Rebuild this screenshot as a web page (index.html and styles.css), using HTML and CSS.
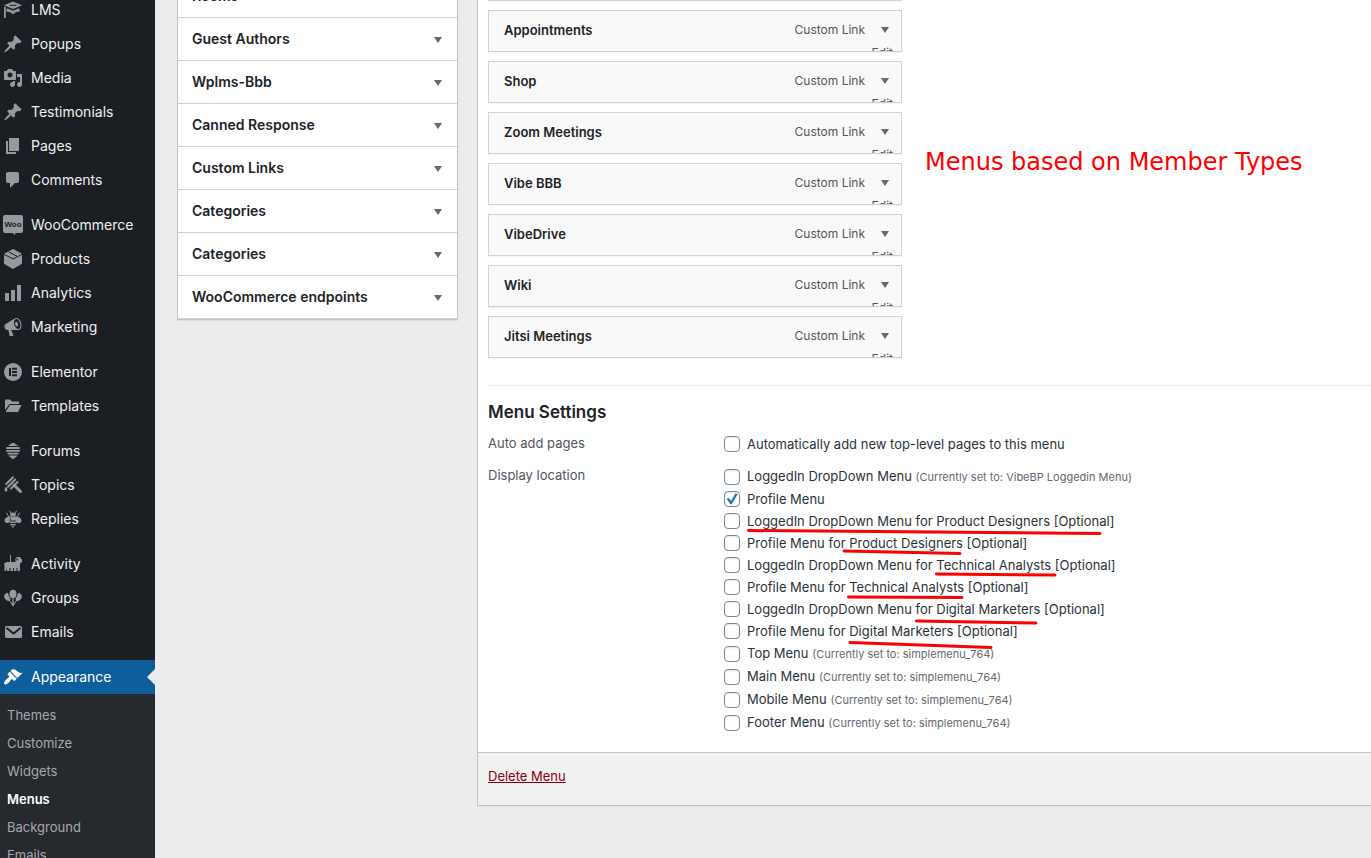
FILE: index.html
```html
<!DOCTYPE html>
<html lang="en">
<head>
<meta charset="utf-8">
<title>Menus</title>
<link rel="stylesheet" href="styles.css">
</head>
<body>
<div class="page">
  <nav class="sidebar" aria-label="Main menu">
    <ul class="nav">
      <li><a href="#"><svg viewBox="0 0 20 20"><path d="M10 1.500l9 3.700-9 3.800-9-3.800zM1 6.500l1.800.8V18H1zM4 8.200l6 2.600 6-2.600 1 3.300c-3 0-5.500 1-7 3-1.500-2-4-3-7-3z"/><path class="cut" d="M6.500 5.300h7"/></svg>LMS</a></li>
      <li><a href="#"><svg viewBox="0 0 20 20"><path d="M10.440 3.020l1.820-1.820 6.360 6.350-1.830 1.820c-1.050-.68-2.480-.57-3.410.36l-.75.75c-.92.93-1.040 2.350-.35 3.410l-1.830 1.820-2.410-2.410-2.800 2.790c-.42.42-3.380 2.710-3.800 2.290s1.860-3.390 2.280-3.810l2.790-2.790L4.100 9.360l1.830-1.820c1.050.69 2.480.57 3.400-.36l.75-.75c.93-.92 1.050-2.350.36-3.410z"/></svg>Popups</a></li>
      <li><a href="#"><svg viewBox="0 0 20 20"><path d="M13 11V4c0-.55-.45-1-1-1h-1.670L9 1H5L3.670 3H2c-.55 0-1 .45-1 1v7c0 .55.45 1 1 1h10c.55 0 1-.45 1-1zM7 4.500c1.380 0 2.500 1.120 2.500 2.500S8.380 9.500 7 9.500 4.500 8.380 4.500 7 5.620 4.500 7 4.500zM14 6h5v10.500c0 1.380-1.120 2.500-2.500 2.500S14 17.880 14 16.500s1.120-2.500 2.500-2.500c.17 0 .34.02.5.05V9h-3V6zm-4 8.050V13h2v3.500c0 1.380-1.120 2.500-2.500 2.500S7 17.880 7 16.500 8.120 14 9.500 14c.17 0 .34.02.5.05z"/></svg>Media</a></li>
      <li><a href="#"><svg viewBox="0 0 20 20"><path d="M10.440 3.020l1.820-1.820 6.360 6.350-1.830 1.820c-1.050-.68-2.480-.57-3.410.36l-.75.75c-.92.93-1.040 2.350-.35 3.410l-1.830 1.820-2.410-2.410-2.800 2.790c-.42.42-3.380 2.710-3.800 2.290s1.860-3.390 2.280-3.810l2.790-2.790L4.100 9.360l1.830-1.820c1.050.69 2.480.57 3.400-.36l.75-.75c.93-.92 1.050-2.350.36-3.410z"/></svg>Testimonials</a></li>
      <li><a href="#"><svg viewBox="0 0 20 20"><path d="M6 15V2h10v13H6zm-1 1h8v2H3V5h2v11z"/></svg>Pages</a></li>
      <li><a href="#"><svg viewBox="0 0 20 20"><path d="M5 2h9c1.100 0 2 .9 2 2v7c0 1.100-.9 2-2 2h-2l-5 5v-5H5c-1.100 0-2-.9-2-2V4c0-1.100.9-2 2-2z"/></svg>Comments</a></li>
      <li class="gap"><a href="#"><svg viewBox="0 0 20 20"><path d="M2 0h16a2 2 0 0 1 2 2v14a2 2 0 0 1-2 2h-5.500l-.5 2-2.500-2H2a2 2 0 0 1-2-2V2a2 2 0 0 1 2-2z"/><text class="woo" x="10" y="12" text-anchor="middle">Woo</text></svg>WooCommerce</a></li>
      <li><a href="#"><svg viewBox="0 0 20 20"><path d="M10 0l9 4.800v10L10 20l-9-5.200v-10z"/><path class="cut" d="M1 5.300l9 4.700 9-4.700M5.500 2.800l9 4.700"/></svg>Products</a></li>
      <li><a href="#"><svg viewBox="0 0 20 20"><path d="M18 18V2h-4v16h4zm-6 0V7H8v11h4zm-6 0v-8H2v8h4z"/></svg>Analytics</a></li>
      <li><a href="#"><svg viewBox="0 0 20 20"><path d="M18.150 5.940c.46 1.620.38 3.220-.02 4.480-.42 1.280-1.260 2.180-2.300 2.480-.16.06-.26.06-.4.06-.06.02-.12.02-.18.02-.06.02-.14.02-.22.02h-6.800l2.220 5.500c.02.14-.06.26-.14.34-.08.1-.24.16-.34.16H6.950c-.1 0-.26-.06-.34-.16-.08-.08-.16-.2-.14-.34l-1-5.500H4.250l-.02-.02c-.5.06-1.080-.18-1.540-.62s-.88-1.080-1.060-1.880c-.24-.8-.2-1.560-.02-2.200.18-.62.58-1.080 1.060-1.300l.02-.02 9-5.400c.1-.06.18-.1.24-.16.06-.04.14-.08.24-.12.16-.08.28-.12.5-.18 1.040-.3 2.240.1 3.220.98s1.840 2.240 2.260 3.860zm-2.580 5.980h-.02c.4-.1.74-.34 1.040-.7.58-.7.86-1.760.86-3.040 0-.64-.1-1.300-.28-1.980-.34-1.360-1.020-2.500-1.780-3.240s-1.680-1.100-2.460-.88c-.82.22-1.400.96-1.700 2-.32 1.040-.28 2.360.06 3.720.38 1.360 1 2.500 1.800 3.240.78.74 1.620 1.100 2.480.88zm-2.540-7.080c.22-.04.42-.02.62.04.38.16.76.48 1.020 1s.42 1.200.42 1.780c0 .3-.04.56-.12.8-.18.48-.44.84-.86.94-.34.1-.8-.06-1.140-.4s-.64-.86-.78-1.500c-.18-.62-.12-1.240.02-1.720s.48-.84.82-.94z"/></svg>Marketing</a></li>
      <li class="gap"><a href="#"><svg viewBox="0 0 20 20"><circle cx="10" cy="10" r="9"/><path class="cut thick" d="M7 6v8M9 6.800h5M9 10h5M9 13.200h5"/></svg>Elementor</a></li>
      <li><a href="#"><svg viewBox="0 0 20 20"><path d="M2 3.500h5l2 2h7v2.500H6.500L2 14z"/><path d="M7 9h11.500L15 16H2.500z"/></svg>Templates</a></li>
      <li class="gap"><a href="#"><svg viewBox="0 0 20 20"><path d="M5.500 5c0-1 1-1.500 2-1.500 0-1 1-1.500 2.500-1.500s2.500.5 2.500 1.500c1 0 2 .5 2 1.500zM4 6h12a1 1 0 0 1 0 2H4a1 1 0 0 1 0-2zM3.500 9h13a1 1 0 0 1 0 1.800h-13a1 1 0 0 1 0-1.800zM5 11.700h10a1 1 0 0 1 0 1.800H5a1 1 0 0 1 0-1.800zM6 14.500h8c0 1.500-1.500 1.500-2 2s-.8 1.500-2 1.500-1.500-1-2-1.500-2-.5-2-2z"/></svg>Forums</a></li>
      <li><a href="#"><svg viewBox="0 0 20 20"><path class="line" d="M10 2.200L3.200 9M12.200 4.500L5 11.700M14.500 7L8 13.500"/><path class="line fat" d="M11 10l6.500 6.500"/><path d="M3 11.500c2 2.500 1.800 5 0 5s-2-2.500 0-5z"/></svg>Topics</a></li>
      <li><a href="#"><svg viewBox="0 0 20 20"><path d="M8.500 7.500C5.500 7 1.500 8.500 1.500 11.500c0 2.500 3 3.500 5.500 1.500zM11.500 7.500c3-.5 7 1 7 4 0 2.500-3 3.500-5.500 1.500zM7 5.500C7 2.800 13 2.800 13 5.500l-1 2H8zM8 8h4l1.500 3.500h-7zM6.500 12.500h7l-.5 1.500H7zM7 15h6l-.7 1.500H7.700zM8.500 17.200h3L10 19z"/><path class="line thin" d="M8 4L6.500 2M12 4l1.500-2M5.500 7.500L3.500 4M14.500 7.500l2-3.500"/></svg>Replies</a></li>
      <li class="gap"><a href="#"><svg viewBox="0 0 20 20"><path d="M7 1h1v7h4.500V4.500L14 3h3l1 2h1v3l-2 1.500V17h-2.500v-3h-1v3H11v-3h-1v3H7.500v-3h-1v3H4v-3l-1 3H1.500V12L1 9.500 3.500 8H7z"/><path class="cut" d="M13.800 6.500V5h1.500"/></svg>Activity</a></li>
      <li><a href="#"><svg viewBox="0 0 20 20"><ellipse cx="10" cy="6" rx="3.500" ry="4.200"/><path d="M5 5c-3 0-4.500 2.500-3.500 5 1 2 3 3.500 5.500 3C8 11 7 9.500 6 8.500zM15 5c3 0 4.500 2.500 3.500 5-1 2-3 3.500-5.500 3-1-2 0-3.500 1-4.500zM9.500 10h1l.5 8H9z"/><path class="line thin" d="M6.500 12.500L9 16.500M13.500 12.500L11 16.500"/></svg>Groups</a></li>
      <li><a href="#"><svg viewBox="0 0 20 20"><path d="M3.500 4h14A1.500 1.500 0 0 1 19 5.500v9a1.500 1.500 0 0 1-1.500 1.500h-14A1.500 1.500 0 0 1 2 14.500v-9A1.500 1.500 0 0 1 3.500 4z"/><path class="cut thick" d="M3.500 6l7 5.500 7-5.500"/></svg>Emails</a></li>
      <li class="gap"><a class="current" href="#"><svg viewBox="0 0 20 20"><path d="M14.480 11.060L7.410 3.990l1.500-1.500c.5-.56 2.300-.47 3.510.32 1.210.8 1.430 1.280 2.910 2.100 1.180.64 2.450 1.260 4.450.85zm-.71.71L6.700 4.700 4.930 6.470c-.39.39-.39 1.020 0 1.410l1.060 1.060c.39.39.39 1.030 0 1.420-.6.6-1.430 1.110-2.210 1.690-.35.26-.7.53-1.010.84C1.430 14.230.4 16.080 1.400 17.070c.99 1 2.840-.03 4.180-1.360.31-.31.58-.66.85-1.020.57-.78 1.080-1.610 1.690-2.210.39-.39 1.020-.39 1.410 0l1.060 1.060c.39.39 1.020.39 1.410 0z"/></svg>Appearance</a>
        <ul class="subnav">
          <li><a href="#">Themes</a></li>
          <li><a href="#">Customize</a></li>
          <li><a href="#">Widgets</a></li>
          <li><a class="selected" href="#">Menus</a></li>
          <li><a href="#">Background</a></li>
          <li><a href="#">Emails</a></li>
        </ul>
      </li>
    </ul>
  </nav>

  <aside class="sources">
    <ul class="accordion">
      <li><button type="button">Rooms<span class="arrow"></span></button></li>
      <li><button type="button">Guest Authors<span class="arrow"></span></button></li>
      <li><button type="button">Wplms-Bbb<span class="arrow"></span></button></li>
      <li><button type="button">Canned Response<span class="arrow"></span></button></li>
      <li><button type="button">Custom Links<span class="arrow"></span></button></li>
      <li><button type="button">Categories<span class="arrow"></span></button></li>
      <li><button type="button">Categories<span class="arrow"></span></button></li>
      <li><button type="button">WooCommerce endpoints<span class="arrow"></span></button></li>
    </ul>
  </aside>

  <main class="editor">
    <div class="editor-body">
      <ul class="items">
        <li class="item"></li>
        <li class="item"><div class="handle"><span class="title">Appointments</span><span class="type">Custom Link</span><span class="arrow"></span></div><a class="edit" href="#">Edit</a></li>
        <li class="item"><div class="handle"><span class="title">Shop</span><span class="type">Custom Link</span><span class="arrow"></span></div><a class="edit" href="#">Edit</a></li>
        <li class="item"><div class="handle"><span class="title">Zoom Meetings</span><span class="type">Custom Link</span><span class="arrow"></span></div><a class="edit" href="#">Edit</a></li>
        <li class="item"><div class="handle"><span class="title">Vibe BBB</span><span class="type">Custom Link</span><span class="arrow"></span></div><a class="edit" href="#">Edit</a></li>
        <li class="item"><div class="handle"><span class="title">VibeDrive</span><span class="type">Custom Link</span><span class="arrow"></span></div><a class="edit" href="#">Edit</a></li>
        <li class="item"><div class="handle"><span class="title">Wiki</span><span class="type">Custom Link</span><span class="arrow"></span></div><a class="edit" href="#">Edit</a></li>
        <li class="item"><div class="handle"><span class="title">Jitsi Meetings</span><span class="type">Custom Link</span><span class="arrow"></span></div><a class="edit" href="#">Edit</a></li>
      </ul>
      <section class="settings">
        <h3>Menu Settings</h3>
        <div class="group">
          <span class="legend">Auto add pages</span>
          <div class="options">
            <label class="option"><input type="checkbox"><span>Automatically add new top-level pages to this menu</span></label>
          </div>
        </div>
        <div class="group">
          <span class="legend">Display location</span>
          <div class="options">
            <label class="option noted"><input type="checkbox"><span>LoggedIn DropDown Menu <small>(Currently set to: VibeBP Loggedin Menu)</small></span></label>
            <label class="option"><input type="checkbox" checked><span>Profile Menu</span></label>
            <label class="option"><input type="checkbox"><span>LoggedIn DropDown Menu for Product Designers [Optional]</span></label>
            <label class="option"><input type="checkbox"><span>Profile Menu for Product Designers [Optional]</span></label>
            <label class="option"><input type="checkbox"><span>LoggedIn DropDown Menu for Technical Analysts [Optional]</span></label>
            <label class="option"><input type="checkbox"><span>Profile Menu for Technical Analysts [Optional]</span></label>
            <label class="option"><input type="checkbox"><span>LoggedIn DropDown Menu for Digital Marketers [Optional]</span></label>
            <label class="option"><input type="checkbox"><span>Profile Menu for Digital Marketers [Optional]</span></label>
            <label class="option noted"><input type="checkbox"><span>Top Menu <small>(Currently set to: simplemenu_764)</small></span></label>
            <label class="option noted"><input type="checkbox"><span>Main Menu <small>(Currently set to: simplemenu_764)</small></span></label>
            <label class="option noted"><input type="checkbox"><span>Mobile Menu <small>(Currently set to: simplemenu_764)</small></span></label>
            <label class="option noted"><input type="checkbox"><span>Footer Menu <small>(Currently set to: simplemenu_764)</small></span></label>
            <svg class="marks" viewBox="724 465 420 270" aria-hidden="true"><path d="M748.500 530.500L1100 533.500M844 551L960 553.500M936.500 574L1055 575M848.500 597L962 597.500M916.500 621L1036 623M850 642.500L991 647.500"/></svg>
          </div>
        </div>
      </section>
    </div>
    <footer class="editor-foot"><a href="#">Delete Menu</a></footer>
    <p class="annotation">Menus based on Member Types</p>
  </main>
</div>
</body>
</html>
```

FILE: styles.css
```css
* { box-sizing: border-box; }
body {
  margin: 0;
  background: #ececec;
  color: #2c3338;
  font: 13px/20px Inter, "Liberation Sans", sans-serif;
}
ul, p, h3 { margin: 0; padding: 0; list-style: none; }
.page {
  display: grid;
  grid-template-columns: 155px 281px 1fr;
  height: 100vh;
  overflow: hidden;
}

/* Sidebar */
.sidebar { background: #1b1e22; overflow: hidden; }
.nav { margin-top: -7px; }
.nav .gap { margin-top: 11px; }
.nav a {
  display: flex;
  align-items: center;
  gap: 8px;
  height: 34px;
  padding-left: 3px;
  color: #f0f0f1;
  font-size: 14px;
  text-decoration: none;
}
.nav svg { width: 20px; height: 20px; fill: #969a9f; }
.nav .cut { fill: none; stroke: #1b1e22; stroke-width: 1; }
.nav .thick { stroke-width: 2; }
.nav .line { fill: none; stroke: #969a9f; stroke-width: 2; stroke-linecap: round; }
.nav .fat { stroke-width: 3; }
.nav .thin { stroke-width: 1; }
.woo { fill: #1b1e22; font: bold 8px "Liberation Sans", sans-serif; }
.nav .current { position: relative; background: #0f5e9c; color: #fff; }
.nav .current svg { fill: #fff; }
.current::after {
  content: "";
  position: absolute;
  right: 0;
  top: 9px;
  border: 8px solid transparent;
  border-left: 0;
  border-right-color: #ececec;
}
.subnav { padding: 7px 0; background: #26292e; }
.nav .subnav a { height: 28px; padding-left: 7px; color: #a7aaad; font-size: 13px; }
.nav .subnav .selected { color: #fff; font-weight: 600; }

/* Link sources */
.sources { padding-left: 22px; width: 303px; }
.accordion {
  margin-top: -25px;
  background: #fff;
  border: 1px solid #c3c4c7;
  border-top: 0;
  box-shadow: 0 1px 1px rgba(0, 0, 0, .06);
}
.accordion li { border-bottom: 1px solid #d2d2d4; }
.accordion button {
  display: flex;
  justify-content: space-between;
  align-items: center;
  width: 100%;
  height: 42px;
  padding: 0 15px 0 14px;
  border: 0;
  background: none;
  color: #1d2327;
  font: 600 14px/20px Inter, "Liberation Sans", sans-serif;
}
.arrow {
  border: 4px solid transparent;
  border-top: 6px solid #646970;
  border-bottom: 0;
}
.accordion .arrow { margin-top: 2px; }

/* Menu editor */
.editor { position: relative; margin: -52px 0 0 41px; }
.editor-body {
  padding: 11px 0 18px 10px;
  border-left: 1px solid #c3c4c7;
  background: #fff;
}
.items { display: grid; gap: 9px; width: 414px; }
.item {
  height: 42px;
  overflow: hidden;
  border: 1px solid #d2d2d4;
  background: #f9f9f9;
  box-shadow: 0 1px 1px rgba(0, 0, 0, .04);
}
.handle {
  display: flex;
  align-items: center;
  gap: 16px;
  padding: 9px 12px 0 15px;
  color: #50575e;
}
.title { flex: 1; color: #1d2327; font-weight: 600; }
.type, .edit { font-size: 12px; }
.edit { display: block; margin: 3px 8px 0 0; color: #50575e; text-align: right; text-decoration: none; }
.settings { margin-top: 27px; padding-top: 14px; border-top: 1px solid #ececec; }
h3 { color: #1d2327; font-size: 17px; font-weight: 600; line-height: 24px; }
.group { display: grid; grid-template-columns: 236px 1fr; margin-top: 9px; }
.group + .group { margin-top: 10px; }
.legend { color: #50575e; }
.options { position: relative; display: grid; }
.option { display: flex; align-items: center; gap: 7px; height: 22px; }
.noted { height: 23px; }
small { color: #646970; font-size: 11px; }
input {
  position: relative;
  appearance: none;
  width: 16px;
  height: 16px;
  margin: 0;
  border: 1px solid #7e8993;
  border-radius: 4px;
  background: #fff;
  box-shadow: inset 0 1px 2px rgba(0, 0, 0, .1);
}
input:checked::before {
  content: "";
  position: absolute;
  inset: 1px;
  background: #1e7db8;
  clip-path: polygon(5% 48%, 25% 42%, 42% 65%, 78% 5%, 98% 8%, 48% 94%, 36% 94%);
}
.marks { position: absolute; left: 0; top: 0; width: 420px; height: 270px; pointer-events: none; }
.marks path { fill: none; stroke: #fe0000; stroke-width: 3; stroke-linecap: round; }
.editor-foot {
  height: 54px;
  padding: 13px 10px;
  border: 1px solid #c3c4c7;
  border-right: 0;
  background: #f1f1f1;
  box-shadow: 0 1px 1px rgba(0, 0, 0, .04);
}
.editor-foot a { color: #8a0008; }
.annotation {
  position: absolute;
  left: 448px;
  top: 197px;
  color: #fe0000;
  font: 24px/34px "DejaVu Sans", sans-serif;
  white-space: nowrap;
}
```
